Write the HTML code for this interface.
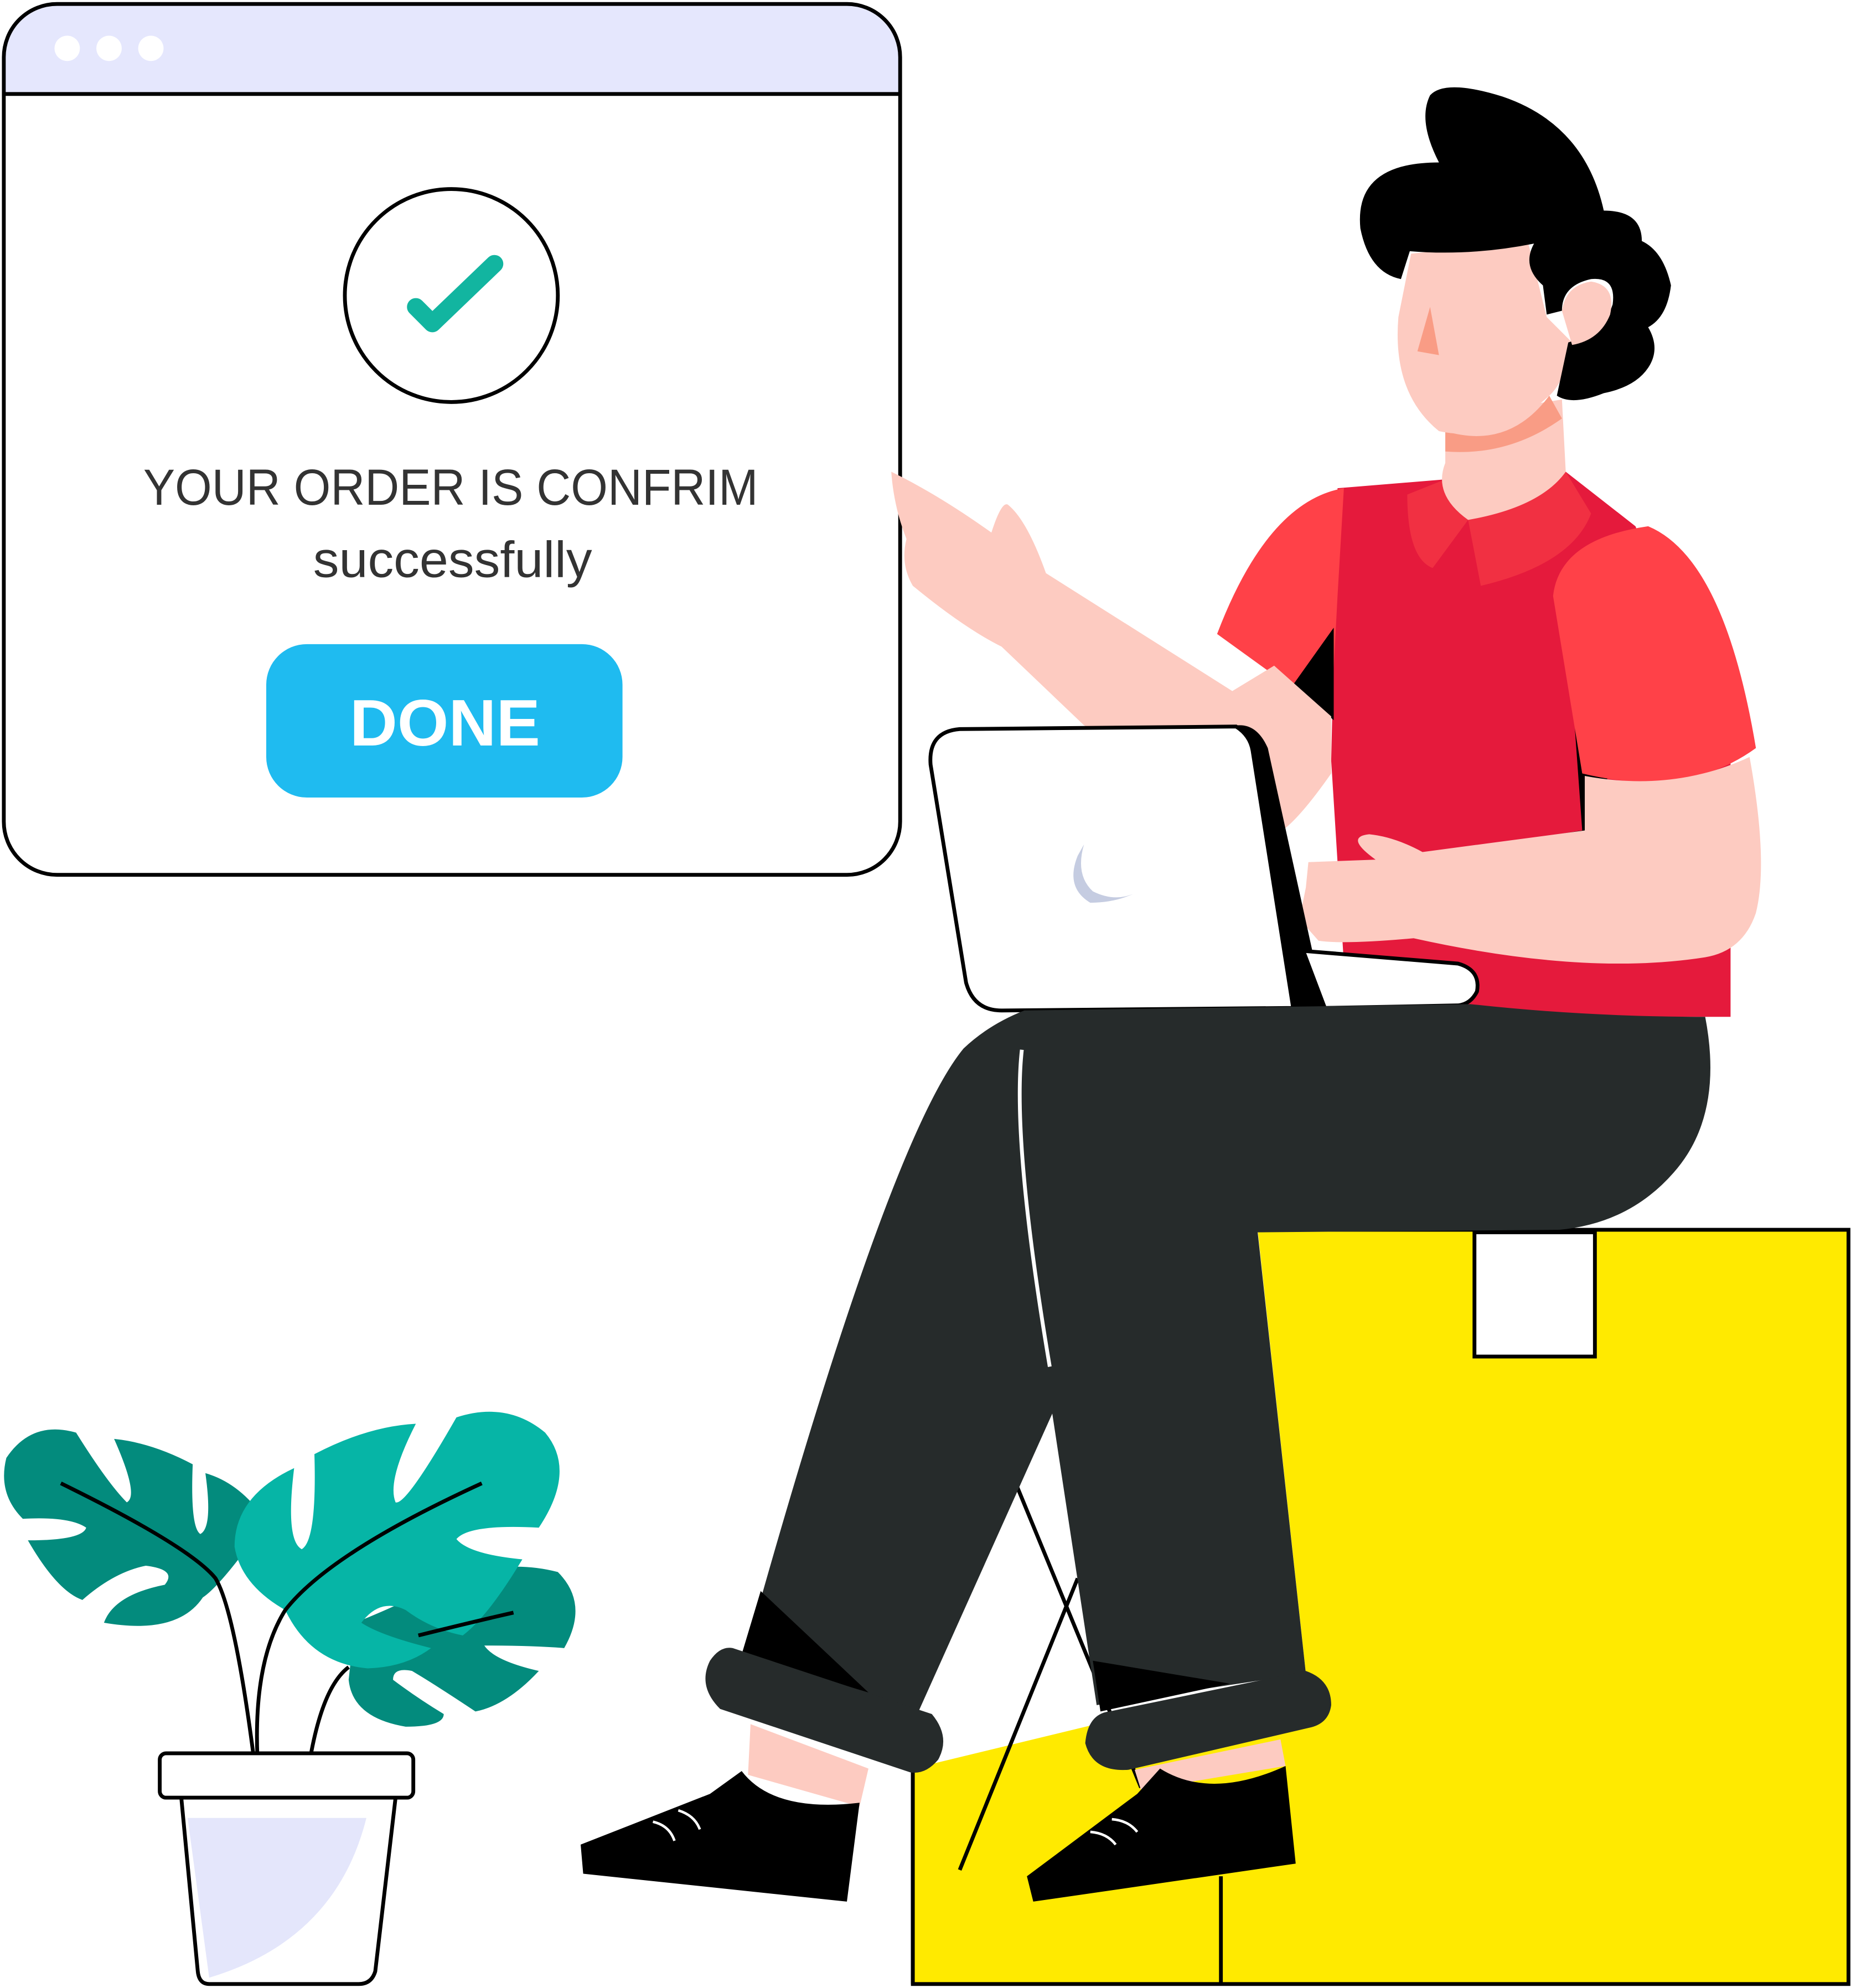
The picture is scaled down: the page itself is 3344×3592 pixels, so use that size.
<!DOCTYPE html>
<html><head><meta charset="utf-8"><style>
html,body{margin:0;padding:0;background:#fff;}
svg{display:block;}
</style></head><body>
<svg width="3344" height="3592" viewBox="0 0 1460 1568" xmlns="http://www.w3.org/2000/svg">
<path d="M45 3 H668 A42 42 0 0 1 710 45 V74 H3 V45 A42 42 0 0 1 45 3Z" fill="#e5e7fd"/>
<rect x="3" y="3" width="707" height="687" rx="42" fill="none" stroke="#000" stroke-width="3"/>
<line x1="3" y1="74" x2="710" y2="74" stroke="#000" stroke-width="3"/>
<circle cx="53" cy="38" r="10" fill="#fff"/><circle cx="86" cy="38" r="10" fill="#fff"/><circle cx="119" cy="38" r="10" fill="#fff"/>
<circle cx="356" cy="233" r="84" fill="none" stroke="#000" stroke-width="3"/>
<polyline points="328,242 341,255 390,208" fill="none" stroke="#12b5a0" stroke-width="14" stroke-linecap="round" stroke-linejoin="round"/>
<text x="113" y="398" textLength="485" lengthAdjust="spacingAndGlyphs" font-family="Liberation Sans, sans-serif" font-size="40" fill="#333">YOUR ORDER IS CONFRIM</text>
<text x="247" y="455" textLength="220" lengthAdjust="spacingAndGlyphs" font-family="Liberation Sans, sans-serif" font-size="40" fill="#333">successfully</text>
<rect x="210" y="508" width="281" height="121" rx="32" fill="#1fbbf0"/>
<text x="351" y="588" font-family="Liberation Sans, sans-serif" font-weight="bold" font-size="52" fill="#fff" text-anchor="middle">DONE</text>

<rect x="720" y="970" width="738" height="595" fill="#ffea00" stroke="#000" stroke-width="3"/>
<rect x="1163" y="972" width="95" height="98" fill="#fff" stroke="#000" stroke-width="3"/>
<line x1="963" y1="1480" x2="963" y2="1565" stroke="#000" stroke-width="3"/>
<path d="M720 970 H992 L1030 1320 L720 1395Z" fill="#fff"/>
<line x1="720" y1="1395" x2="720" y2="1565" stroke="#000" stroke-width="3"/>
<line x1="802" y1="1172" x2="900" y2="1410" stroke="#000" stroke-width="3"/>
<line x1="850" y1="1245" x2="757" y2="1475" stroke="#000" stroke-width="3"/>

<path d="M1055 385 L1140 378 L1235 372 L1290 415 L1365 600 L1365 802 L1160 802 L1060 760 L1050 600Z" fill="#e51a3c"/>
<path d="M1060 385 Q1000 395 960 500 L1050 565 L1055 470Z" fill="#ff4148"/>
<path d="M1020 540 L1052 495 L1052 568Z" fill="#000"/>
<path d="M1235 475 L1282 675 L1120 675 L1248 655Z" fill="#000"/>
<path d="M1300 415 Q1360 440 1385 590 Q1330 630 1248 610 L1225 470 Q1230 425 1300 415Z" fill="#ff4148"/>
<path d="M1110 390 L1140 378 L1158 410 L1130 448 Q1110 440 1110 390Z" fill="#f13042"/>
<path d="M1158 410 L1235 372 L1255 405 Q1240 445 1168 462Z" fill="#f13042"/>
<path d="M1140 330 L1232 315 L1235 372 Q1215 400 1158 410 Q1130 390 1140 365Z" fill="#fdcbc1"/>
<path d="M1140 340 Q1190 355 1222 312 L1232 330 Q1190 360 1140 356Z" fill="#f99c85"/>
<path d="M1113 200 L1205 190 L1220 250 L1240 270 Q1235 300 1222 312 Q1180 350 1135 340 Q1098 310 1103 250Z" fill="#fdcbc1"/>
<path d="M1128 242 L1135 280 L1118 277Z" fill="#f99c85"/>
<path d="M1135 128 Q1118 95 1128 75 Q1140 62 1185 76 Q1250 98 1265 166 Q1295 166 1295 190 Q1312 198 1318 225 Q1315 250 1300 258 Q1310 275 1300 290 Q1290 305 1265 310 Q1240 320 1228 312 L1237 270 Q1265 262 1272 240 Q1275 218 1255 220 Q1232 225 1232 245 L1220 248 L1217 225 Q1200 210 1210 192 Q1160 202 1112 198 L1105 220 Q1080 215 1073 180 Q1068 128 1135 128Z" fill="#000"/>
<path d="M1255 222 Q1275 225 1270 248 Q1262 268 1240 272 L1232 245 Q1235 225 1255 222Z" fill="#fdcbc1"/>
<path d="M703 372 Q740 390 782 420 Q790 395 795 398 Q810 410 825 452 L972 545 L1005 525 L1050 565 L1050 610 Q1015 660 1000 660 Q960 640 855 572 L790 510 Q760 495 720 462 Q710 445 715 425 Q705 400 703 372Z" fill="#fdcbc1"/>
<path d="M1250 612 Q1320 625 1380 597 Q1395 680 1385 720 Q1375 750 1345 755 Q1250 770 1115 740 Q1060 745 1040 742 L1025 725 L1030 700 L1032 680 L1085 678 Q1060 660 1080 658 Q1100 660 1122 672 L1250 655Z" fill="#fdcbc1"/>
<path d="M757 575 L978 572 Q992 572 1000 590 L1045 795 L790 797 Q768 797 762 775 L734 603 Q732 577 757 575Z" fill="#000"/>
<path d="M757 575 L975 573 Q986 580 988 592 L1020 795 L790 797 Q768 797 762 775 L734 603 Q732 577 757 575Z" fill="#fff" stroke="#000" stroke-width="3"/>
<path d="M1028 750 L1150 760 Q1168 765 1165 782 Q1160 792 1150 793 L1045 795Z" fill="#fff" stroke="#000" stroke-width="3"/>
<path d="M855 666 Q848 690 862 703 Q880 712 896 704 Q880 712 860 712 Q840 700 850 675Z" fill="#c5cce1"/>
<path d="M808 797 L1160 792 Q1250 802 1345 802 Q1360 880 1320 925 Q1285 965 1230 970 L992 972 L1030 1320 L865 1345 L830 1115 L720 1360 L585 1315 Q700 900 760 827 Q780 808 808 797Z" fill="#262b2b"/>
<path d="M806 828 Q798 900 828 1078" fill="none" stroke="#fff" stroke-width="3"/>
<path d="M600 1255 L685 1335 L585 1305Z" fill="#000"/>
<path d="M862 1310 L970 1328 L868 1350Z" fill="#000"/>
<path d="M578 1300 L735 1352 Q750 1370 740 1388 Q730 1400 718 1398 L568 1348 Q550 1330 560 1310 Q568 1298 578 1300Z" fill="#262b2b"/>
<path d="M875 1350 L1030 1318 Q1050 1325 1050 1345 Q1048 1360 1032 1363 L890 1396 Q862 1398 856 1375 Q858 1352 875 1350Z" fill="#262b2b"/>
<path d="M592 1360 L685 1395 L678 1425 L590 1400Z" fill="#fdcbc1"/>
<path d="M895 1396 L1010 1372 L1014 1393 L900 1412Z" fill="#fdcbc1"/>
<path d="M585 1397 Q610 1430 678 1422 L668 1500 L460 1478 L458 1455 L560 1415Z" fill="#000"/>
<path d="M915 1395 Q955 1420 1014 1393 L1022 1470 L815 1500 L810 1480 L897 1415Z" fill="#000"/>
<g fill="none" stroke="#fff" stroke-width="2"><path d="M515 1437 Q528 1440 532 1452"/><path d="M535 1428 Q548 1432 552 1443"/><path d="M860 1445 Q873 1446 880 1455"/><path d="M877 1435 Q890 1436 897 1445"/></g>
<path d="M60 1130 Q85 1170 100 1185 Q110 1180 90 1135 Q120 1138 152 1155 Q150 1205 158 1210 Q168 1205 162 1162 Q190 1170 210 1200 Q175 1250 160 1260 Q140 1290 82 1280 Q90 1258 130 1250 Q140 1238 115 1235 Q90 1240 65 1262 Q45 1255 22 1215 Q65 1215 68 1205 Q55 1196 18 1198 Q-2 1178 5 1150 Q25 1120 60 1130Z" fill="#038b7d"/>
<path d="M280 1280 Q330 1260 340 1250 Q395 1228 440 1240 Q465 1265 445 1300 Q420 1298 382 1298 Q390 1310 425 1318 Q400 1345 375 1350 Q345 1330 325 1318 Q310 1315 310 1325 Q330 1340 350 1352 Q350 1362 320 1362 Q278 1355 275 1325Z" fill="#038b7d"/>
<path d="M360 1118 Q400 1105 430 1130 Q455 1160 425 1205 Q370 1202 360 1214 Q370 1226 412 1230 Q385 1275 365 1290 Q340 1285 320 1270 Q300 1260 285 1280 Q300 1290 340 1300 Q320 1315 290 1316 Q245 1312 225 1270 Q190 1250 185 1220 Q185 1180 232 1158 Q225 1215 238 1222 Q250 1215 248 1147 Q290 1125 328 1123 Q305 1168 312 1185 Q320 1188 360 1118Z" fill="#06b5a6"/>
<g fill="none" stroke="#000" stroke-width="3">
<path d="M48 1170 Q150 1220 170 1245 Q185 1270 200 1385"/>
<path d="M380 1170 Q260 1225 225 1270 Q200 1310 203 1385"/>
<path d="M405 1272 Q370 1280 330 1290"/>
<path d="M275 1315 Q255 1330 245 1385"/>
</g>
<path d="M143 1418 L312 1418 L296 1555 Q293 1565 283 1565 L165 1565 Q157 1565 156 1555Z" fill="#fff" stroke="#000" stroke-width="3"/>
<path d="M148 1434 L289 1434 Q265 1530 165 1560 Z" fill="#e4e6fb"/>
<rect x="126" y="1383" width="200" height="35" rx="5" fill="#fff" stroke="#000" stroke-width="3"/>
</svg>
</body></html>
